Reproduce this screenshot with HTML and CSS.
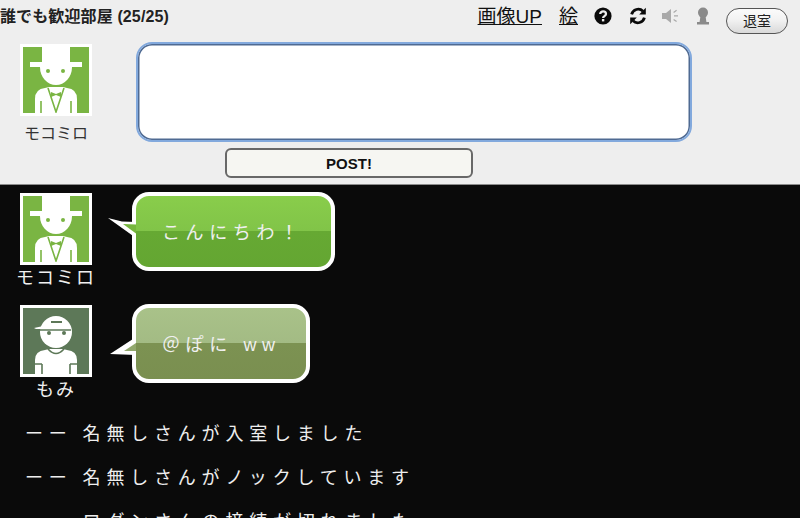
FILE: index.html
```html
<!DOCTYPE html>
<html lang="ja">
<head>
<meta charset="utf-8">
<title>誰でも歓迎部屋</title>
<link rel="stylesheet" href="styles.css">
</head>
<body>
<svg class="defs" width="0" height="0" aria-hidden="true">
  <symbol id="gentleman" viewBox="0 0 66 66">
    <rect class="w" x="19" y="0" width="28" height="16"/>
    <rect class="w" x="7" y="15" width="52" height="5"/>
    <path class="w" d="M17 20h32a16 18 0 1 1-32 0z"/>
    <circle class="c" cx="25" cy="24" r="2"/>
    <circle class="c" cx="40" cy="24" r="2"/>
    <path class="w" d="M12 66V52q0-10 10-11l4-1h14l4 1q10 1 10 11v14z"/>
    <path class="l" d="M18 54v12M48 54v12M25 41l8 24 8-24"/>
    <path class="c" d="M28 45l5 2 5-2v5l-5-2-5 2z"/>
  </symbol>
  <symbol id="capboy" viewBox="0 0 66 66">
    <circle class="w" cx="33" cy="24" r="16"/>
    <path class="w" d="M11 20l14-3h22v4H13z"/>
    <rect class="c" x="28" y="13" width="11" height="2"/>
    <path class="l" d="M14 22h34"/>
    <circle class="c" cx="26" cy="25" r="2"/>
    <circle class="c" cx="41" cy="25" r="2"/>
    <path class="w" d="M12 66V52q0-9 10-10l4-1h14l4 1q10 1 10 10v14z"/>
    <path class="l" d="M12 56h7M47 56h7M19 56v10M47 56v10M25 41q8 9 16 0"/>
  </symbol>
</svg>

<header class="top">
  <div class="bar">
    <h1 class="room">誰でも歓迎部屋 (25/25)</h1>
    <nav class="tools">
      <a class="link link-up" href="#">画像UP</a>
      <a class="link link-draw" href="#">絵</a>
      <svg class="icon icon-help" viewBox="0 0 18 18"><circle cx="9" cy="9" r="8.6" fill="#0a0a0a"/><path d="M6.2 7.1c0-3.7 5.8-3.6 5.8-.1 0 2.1-2.9 2.1-2.9 4" fill="none" stroke="#eee" stroke-width="2.3"/><rect x="7.9" y="12" width="2.4" height="2.4" fill="#eee"/></svg>
      <svg class="icon icon-reload" viewBox="0 0 18 18"><path d="M2.6 7.4A6.8 6.8 0 0 1 14 4.2" fill="none" stroke="#0a0a0a" stroke-width="2.8"/><path d="M16.8.8v6.6h-6.6z" fill="#0a0a0a"/><path d="M15.4 10.6A6.8 6.8 0 0 1 4 13.8" fill="none" stroke="#0a0a0a" stroke-width="2.8"/><path d="M1.2 17.2v-6.6h6.6z" fill="#0a0a0a"/></svg>
      <svg class="icon icon-sound" viewBox="0 0 20 18"><path d="M1 6h4l5-4v14l-5-4H1z" fill="#a9a9a9"/><path d="M13 8.9h4M12.6 5.4l3-2.2M12.6 12.4l3 2.2" stroke="#a9a9a9" stroke-width="1.2" fill="none"/></svg>
      <svg class="icon icon-lock" viewBox="0 0 14 18"><circle cx="7" cy="5.6" r="5" fill="#8a8a8a"/><path d="M4.6 8h4.8l1 7H13v2.4H1V15h2.6z" fill="#8a8a8a"/></svg>
      <button class="exit" type="button">退室</button>
    </nav>
  </div>
  <div class="compose">
    <div class="me">
      <svg class="avatar avatar-green"><use href="#gentleman"/></svg>
      <span class="me-name">モコミロ</span>
    </div>
    <div class="entry">
      <textarea class="message" aria-label="message"></textarea>
      <button class="post" type="button">POST!</button>
    </div>
  </div>
</header>

<main class="log">
  <article class="talk talk-first">
    <div class="who">
      <svg class="avatar avatar-green"><use href="#gentleman"/></svg>
      <span class="who-name">モコミロ</span>
    </div>
    <div class="bubble bubble-green">
      <svg class="tail" viewBox="0 0 28 20"><path d="M0 0l14 3.5 14 .5v16z" fill="#fff"/><path class="tail-fill" d="M15 6l13 .5v9z"/></svg>
      <p class="say">こんにちわ！</p>
    </div>
  </article>
  <article class="talk talk-second">
    <div class="who">
      <svg class="avatar avatar-moss"><use href="#capboy"/></svg>
      <span class="who-name">もみ</span>
    </div>
    <div class="bubble bubble-moss">
      <svg class="tail tail-low" viewBox="0 0 28 20"><path d="M2 17L28 0v18z" fill="#fff"/><path class="tail-fill" d="M16 14L28 6v8z"/></svg>
      <p class="say">＠ぽに ww</p>
    </div>
  </article>
  <p class="sys">ーー<span class="sys-text">名無しさんが入室しました</span></p>
  <p class="sys">ーー<span class="sys-text">名無しさんがノックしています</span></p>
  <p class="sys">ーー<span class="sys-text">ログンさんの接続が切れました</span></p>
</main>
</body>
</html>
```
FILE: styles.css
```css
* { box-sizing: border-box; }
html, body { margin: 0; height: 100%; overflow: hidden; }
body {
  width: 800px;
  height: 518px;
  background: #0a0a0a;
  font-family: "Liberation Sans", "Noto Sans CJK JP", sans-serif;
  display: flex;
  flex-direction: column;
}
.defs { position: absolute; }

.top {
  height: 185px;
  flex: none;
  background: #eeeeee;
  border-bottom: 1px solid #8c8c8c;
  color: #111;
}
.bar {
  display: flex;
  justify-content: space-between;
  align-items: center;
  height: 35px;
  padding: 0 12px 0 0;
}
.room { margin: -1px 0 0; font-size: 16px; letter-spacing: 0.12px; font-weight: bold; line-height: 20px; color: #222; }
.tools { display: flex; align-items: center; }
.link { color: #111; font-size: 19px; line-height: 24px; text-decoration: underline; margin-top: -2px; }
.link-up { margin-right: 17px; }
.link-draw { margin-right: 16px; }
.icon { display: block; flex: none; margin-top: -3px; }
.icon-help { width: 18px; height: 18px; margin-right: 17px; }
.icon-reload { width: 18px; height: 18px; margin-right: 14px; margin-top: -4px; }
.icon-sound { width: 20px; height: 18px; margin-right: 15px; }
.icon-lock { width: 14px; height: 18px; margin-right: 16px; margin-top: -4px; }
.exit {
  width: 62px;
  height: 26px;
  padding: 0;
  border: 1px solid #555;
  border-radius: 13px;
  background: linear-gradient(#fbfbfb, #f2f2f2 45%, #d9d9d9);
  color: #222;
  font-family: inherit;
  font-size: 14px;
  line-height: 24px;
  margin-top: 7px;
}

.compose { display: flex; }
.me {
  width: 136px;
  padding: 9px 0 0 20px;
  display: flex;
  flex-direction: column;
}
.me-name {
  width: 72px;
  margin-top: 6px;
  text-align: center;
  font-size: 16px;
  line-height: 24px;
  color: #333;
  white-space: nowrap;
}
.avatar { display: block; width: 72px; height: 72px; padding: 0; border: 3px solid #fff; flex: none; overflow: hidden; }
.avatar-green { background: #7ab543; --c: #7ab543; }
.avatar-moss { background: #5d7858; --c: #5d7858; }
.w { fill: #fff; }
.c { fill: var(--c); }
.l { fill: none; stroke: var(--c); stroke-width: 1.6; }

.entry { width: 556px; padding-top: 7px; display: flex; flex-direction: column; align-items: flex-start; }
.message {
  display: block;
  width: 556px;
  height: 100px;
  border: 2px solid #82a9dd;
  border-radius: 16px;
  box-shadow: inset 0 0 0 1.5px #4f6a92;
  background: #fff;
  resize: none;
  outline: none;
  padding: 4px;
}
.post {
  width: 248px;
  height: 30px;
  margin: 6px 0 0 89px;
  padding: 0;
  border: 2px solid #686868;
  border-radius: 6px;
  background: #f6f6f2;
  color: #111;
  font-family: inherit;
  font-weight: bold;
  font-size: 15px;
}

.log { flex: 1; min-height: 0; padding: 7px 0 0 0; color: #f0f0f0; overflow: hidden; }
.talk { display: flex; align-items: flex-start; }
.talk-first { height: 112px; }
.talk-second { height: 114px; }
.who { width: 112px; padding-top: 1px; display: flex; flex-direction: column; align-items: center; flex: none; }
.who-name { font-size: 18px; letter-spacing: 2px; line-height: 24px; margin-top: 1px; white-space: nowrap; color: #f0f0f0; }
.bubble {
  position: relative;
  margin-left: 20px;
  height: 79px;
  border: 4px solid #fff;
  border-radius: 17px;
  display: flex;
  align-items: center;
  padding: 2px 0 0 26px;
}
.bubble-green { width: 203px; background: linear-gradient(#89cd4b 0, #81c448 49.5%, #66a933 50%, #64a632 100%); --t: #76b63e; }
.bubble-moss { width: 178px; background: linear-gradient(#a9c289 0, #a3bb84 49.5%, #7c9252 50%, #7a8f50 100%); --t: #91a86c; }
.tail { position: absolute; left: -28px; top: 22px; width: 28px; height: 20px; }
.tail-low { top: 29px; }
.tail-fill { fill: var(--t); }
.say {
  margin: 0;
  font-size: 18px;
  letter-spacing: 5.6px;
  line-height: 24px;
  color: #f0f0f0;
  white-space: nowrap;
}
.sys {
  margin: 0;
  padding-left: 25px;
  height: 44px;
  font-size: 18px;
  letter-spacing: 5.8px;
  line-height: 32px;
  white-space: nowrap;
  color: #eeeeee;
}
.sys-text { margin-left: 10px; }
```
